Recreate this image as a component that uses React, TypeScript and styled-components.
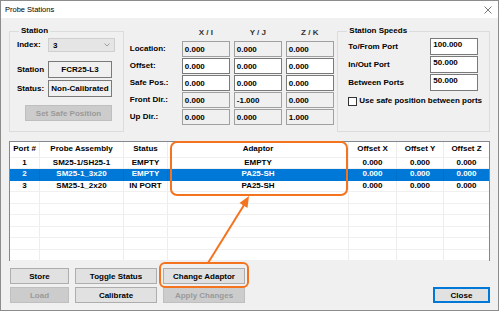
import React from 'react'
import styled, {createGlobalStyle} from 'styled-components'

const GlobalStyle = createGlobalStyle`
  html, body {
    margin: 0;
    padding: 0;
    background: #ffffff;
  }
  * {
    box-sizing: border-box;
  }
`

const orange = '#f4731f'

type Row = {port: string, assembly: string, status: string, adaptor: string, x: string, y: string, z: string}

const rows: Row[] = [
    {port: '1', assembly: 'SM25-1/SH25-1', status: 'EMPTY', adaptor: 'EMPTY', x: '0.000', y: '0.000', z: '0.000'},
    {port: '2', assembly: 'SM25-1_3x20', status: 'EMPTY', adaptor: 'PA25-SH', x: '0.000', y: '0.000', z: '0.000'},
    {port: '3', assembly: 'SM25-1_2x20', status: 'IN PORT', adaptor: 'PA25-SH', x: '0.000', y: '0.000', z: '0.000'},
]

const columns = ['Port #', 'Probe Assembly', 'Status', 'Adaptor', 'Offset X', 'Offset Y', 'Offset Z']
const colWidths = '30px 84px 44px 181px 48px 47px 1fr'

const coords = [
    {label: 'Location:', values: ['0.000', '0.000', '0.000'], readOnly: true},
    {label: 'Offset:', values: ['0.000', '0.000', '0.000'], readOnly: false},
    {label: 'Safe Pos.:', values: ['0.000', '0.000', '0.000'], readOnly: false},
    {label: 'Front Dir.:', values: ['0.000', '-1.000', '0.000'], readOnly: true},
    {label: 'Up Dir.:', values: ['0.000', '0.000', '1.000'], readOnly: true},
]

const speeds = [
    {label: 'To/From Port', value: '100.000'},
    {label: 'In/Out Port', value: '50.000'},
    {label: 'Between Ports', value: '50.000'},
]

export default function App() {
    return (
        <>
            <GlobalStyle/>
            <Window>
                <TitleBar>
                    <Title>Probe Stations</Title>
                    <svg width="8" height="8" viewBox="0 0 8 8">
                        <path d="M0.5 0.5 L7.5 7.5 M7.5 0.5 L0.5 7.5" stroke="#6a6a6a" strokeWidth="0.9"/>
                    </svg>
                </TitleBar>
                <Body>
                    <TopRow>
                        <Group width={115}>
                            <Legend>Station</Legend>
                            <StationRow top={1}>
                                <Label>Index:</Label>
                                <Combo>
                                    <span>3</span>
                                    <svg width="6" height="4" viewBox="0 0 6 4">
                                        <path d="M0.5 0.5 L3 3 L5.5 0.5" fill="none" stroke="#8a8a8a" strokeWidth="0.8"/>
                                    </svg>
                                </Combo>
                            </StationRow>
                            <StationRow top={9}>
                                <Label>Station</Label>
                                <InfoBox>FCR25-L3</InfoBox>
                            </StationRow>
                            <StationRow top={2}>
                                <Label>Status:</Label>
                                <InfoBox>Non-Calibrated</InfoBox>
                            </StationRow>
                            <SafeButton disabled>Set Safe Position</SafeButton>
                        </Group>

                        <CoordPanel>
                            <span/>
                            <ColHead>X / I</ColHead>
                            <ColHead>Y / J</ColHead>
                            <ColHead>Z / K</ColHead>
                            {coords.map(c => (
                                <React.Fragment key={c.label}>
                                    <Label>{c.label}</Label>
                                    {c.values.map((v, i) => (
                                        <Field key={i} readOnly={c.readOnly}>{v}</Field>
                                    ))}
                                </React.Fragment>
                            ))}
                        </CoordPanel>

                        <Group width={153}>
                            <Legend>Station Speeds</Legend>
                            <SpeedGrid>
                                {speeds.map(s => (
                                    <React.Fragment key={s.label}>
                                        <Label>{s.label}</Label>
                                        <SpeedField>{s.value}</SpeedField>
                                    </React.Fragment>
                                ))}
                            </SpeedGrid>
                            <CheckRow>
                                <CheckBox/>
                                <Label>Use safe position between ports</Label>
                            </CheckRow>
                        </Group>
                    </TopRow>

                    <Table>
                        <TableRow header>
                            {columns.map(c => <Cell key={c}>{c}</Cell>)}
                        </TableRow>
                        {rows.map(r => (
                            <TableRow key={r.port} selected={r.port === '2'}>
                                <Cell>{r.port}</Cell>
                                <Cell>{r.assembly}</Cell>
                                <Cell>{r.status}</Cell>
                                <Cell>{r.adaptor}</Cell>
                                <Cell>{r.x}</Cell>
                                <Cell>{r.y}</Cell>
                                <Cell>{r.z}</Cell>
                            </TableRow>
                        ))}
                        {Array.from({length: 6}).map((_, i) => (
                            <TableRow key={'e' + i}>
                                {columns.map(c => <Cell key={c}/>)}
                            </TableRow>
                        ))}
                    </Table>

                    <Buttons>
                        <Button>Store</Button>
                        <Button>Toggle Status</Button>
                        <Button>Change Adaptor</Button>
                        <span/>
                        <Button disabled>Load</Button>
                        <Button>Calibrate</Button>
                        <Button disabled>Apply Changes</Button>
                        <Button primary>Close</Button>
                    </Buttons>
                </Body>

                {/* callout annotation drawn over the dialog */}
                <Callout width="499" height="311" viewBox="0 0 499 311">
                    <rect x="171" y="142" width="176" height="53" rx="6" fill="none" stroke={orange} strokeWidth="2"/>
                    <rect x="160" y="263" width="88" height="24" rx="5" fill="none" stroke={orange} strokeWidth="2"/>
                    <line x1="208" y1="263" x2="244" y2="205" stroke={orange} strokeWidth="2"/>
                    <polygon points="249,196 247.5,208 239.5,203" fill={orange}/>
                </Callout>
            </Window>
        </>
    )
}

const Window = styled.div`
  position: relative;
  width: 499px;
  height: 311px;
  border: 1px solid #8c8c8c;
  background: #f0f0f0;
  font-family: "Liberation Sans", Arial, sans-serif;
  font-size: 8px;
  font-weight: bold;
  color: #000;
  overflow: hidden;
`

const TitleBar = styled.div`
  height: 17px;
  background: #ffffff;
  display: flex;
  align-items: center;
  justify-content: space-between;
  padding: 0 6px 0 4px;
`

const Title = styled.span`
  font-weight: normal;
  font-size: 7.5px;
  color: #000;
`

const Body = styled.div`
  display: flex;
  flex-direction: column;
  padding: 7px 8px 0 8px;
`

const TopRow = styled.div`
  display: flex;
  height: 107px;
  align-items: flex-start;
`

const Group = styled.fieldset<{ width: number }>`
  width: ${({width}) => width}px;
  height: 107px;
  margin: 0;
  padding: 0 6px 0 7px;
  border: 1px solid #dcdcdc;
  min-width: 0;
`

const Legend = styled.legend`
  padding: 0 2px;
  margin-left: 2px;
  line-height: 12px;
  font-size: 8px;
`

const Label = styled.span`
  white-space: nowrap;
  line-height: 10px;
`

const StationRow = styled.div<{ top: number }>`
  display: grid;
  grid-template-columns: 31px 1fr;
  align-items: center;
  margin-top: ${({top}) => top}px;
`

const Combo = styled.div`
  height: 14px;
  width: 67px;
  background: #e5e5e5;
  border: 1px solid #cfcfcf;
  display: flex;
  align-items: center;
  justify-content: space-between;
  padding: 0 4px 0 4px;
`

const InfoBox = styled.div`
  width: 64px;
  height: 17px;
  border: 1px solid #7a7a7a;
  background: #f0f0f0;
  display: flex;
  align-items: center;
  justify-content: center;
  white-space: nowrap;
`

const Button = styled.button<{ primary?: boolean }>`
  height: 16px;
  margin: 0;
  padding: 0;
  font-family: "Liberation Sans", Arial, sans-serif;
  font-size: 8px;
  font-weight: bold;
  color: #000;
  background: #e1e1e1;
  border: 1px solid ${({primary}) => primary ? '#0078d7' : '#adadad'};
  box-shadow: ${({primary}) => primary ? 'inset 0 0 0 1px #0078d7' : 'none'};

  &:disabled {
    background: #cccccc;
    border-color: #bfbfbf;
    color: #9a9a9a;
  }
`

const SafeButton = styled(Button)`
  display: block;
  width: 87px;
  margin: 8px 0 0 8px;
`

const CoordPanel = styled.div`
  width: 214px;
  display: grid;
  grid-template-columns: 48px 48px 48px 48px;
  grid-template-rows: 12px repeat(5, 16px);
  column-gap: 4px;
  row-gap: 1px;
  align-items: center;
  padding: 3px 0 0 6px;

  & > :nth-child(-n+4) {
    margin-bottom: 3px;
  }
`

const ColHead = styled.span`
  text-align: center;
  color: #333;
  font-weight: bold;
  line-height: 10px;
`

const Field = styled.div<{ readOnly?: boolean }>`
  height: 16px;
  border: 1px solid ${({readOnly}) => readOnly ? '#a0a0a0' : '#7a7a7a'};
  background: ${({readOnly}) => readOnly ? '#f0f0f0' : '#ffffff'};
  display: flex;
  align-items: center;
  padding-left: 2px;
`

const SpeedGrid = styled.div`
  display: grid;
  grid-template-columns: 82px 48px;
  grid-template-rows: repeat(3, 17px);
  row-gap: 1px;
  align-items: center;
  padding-left: 3px;
  margin-top: 1px;
`

const SpeedField = styled(Field)`
  height: 17px;
  align-items: flex-start;
  padding-top: 1px;
`

const CheckRow = styled.div`
  display: flex;
  align-items: center;
  gap: 2px;
  margin: 5px 0 0 3px;
`

const CheckBox = styled.span`
  width: 9px;
  height: 9px;
  border: 1px solid #333;
  background: #fff;
  flex: none;
`

const Table = styled.div`
  margin-top: 9px;
  height: 120px;
  border: 1px solid #828790;
  background: #ffffff;
  display: flex;
  flex-direction: column;
`

const TableRow = styled.div<{ header?: boolean, selected?: boolean }>`
  display: grid;
  grid-template-columns: ${colWidths};
  height: ${({header}) => header ? '15.5px' : '11.5px'};
  background: ${({selected}) => selected ? '#0078d7' : 'transparent'};
  color: ${({selected}) => selected ? '#ffffff' : '#000'};
  border-bottom: 1px solid ${({selected}) => selected ? '#0078d7' : '#f0f0f0'};
  flex: none;
`

const Cell = styled.div`
  display: flex;
  align-items: center;
  justify-content: center;
  border-right: 1px solid rgba(0, 0, 0, 0.07);
  white-space: nowrap;
  line-height: 10px;

  &:last-child {
    border-right: none;
  }
`

const Buttons = styled.div`
  margin-top: 7px;
  display: grid;
  grid-template-columns: 59px 82px 82px 1fr;
  column-gap: 6px;
  row-gap: 3px;
  padding-left: 1px;

  & > :nth-child(8) {
    width: 57px;
    justify-self: end;
  }
`

const Callout = styled.svg`
  position: absolute;
  left: -1px;
  top: -1px;
  pointer-events: none;
`
